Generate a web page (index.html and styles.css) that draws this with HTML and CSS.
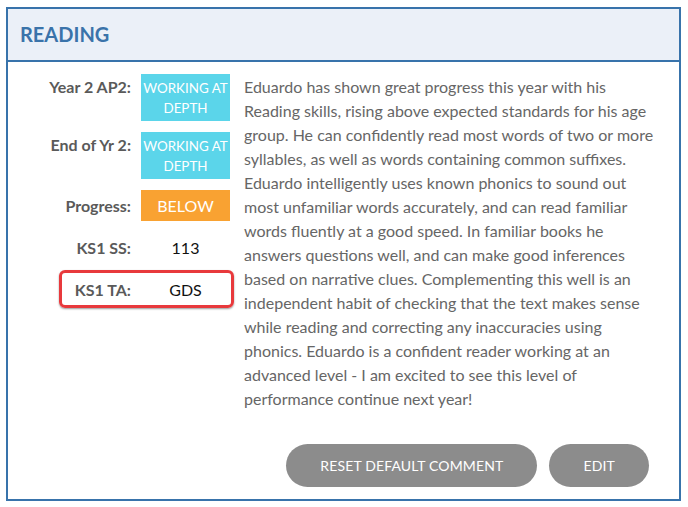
FILE: index.html
```html
<!DOCTYPE html>
<html lang="en">
<head>
  <meta charset="UTF-8" />
  <title>Reading report</title>
  <link rel="stylesheet" href="styles.css">
</head>
<body>

<div class="panel">
  <div class="panel-head">
    <h2 class="panel-title">READING</h2>
  </div>

  <div class="panel-body">
    <div class="summary">
      <div class="stats">
        <div class="stat">
          <div class="stat-label">Year 2 AP2:</div>
          <div class="stat-value"><span class="badge badge-depth">WORKING AT DEPTH</span></div>
        </div>
        <div class="stat">
          <div class="stat-label">End of Yr 2:</div>
          <div class="stat-value"><span class="badge badge-depth">WORKING AT DEPTH</span></div>
        </div>
        <div class="stat">
          <div class="stat-label">Progress:</div>
          <div class="stat-value"><span class="badge badge-below">BELOW</span></div>
        </div>
        <div class="stat">
          <div class="stat-label">KS1 SS:</div>
          <div class="stat-value">113</div>
        </div>
        <div class="stat flagged">
          <div class="stat-label">KS1 TA:</div>
          <div class="stat-value">GDS</div>
        </div>
      </div>

      <p class="comment">Eduardo has shown great progress this year with his Reading skills, rising above expected standards for his age group. He can confidently read most words of two or more syllables, as well as words containing common suffixes. Eduardo intelligently uses known phonics to sound out most unfamiliar words accurately, and can read familiar words fluently at a good speed. In familiar books he answers questions well, and can make good inferences based on narrative clues. Complementing this well is an independent habit of checking that the text makes sense while reading and correcting any inaccuracies using phonics. Eduardo is a confident reader working at an advanced level - I am excited to see this level of performance continue next year!</p>
    </div>

    <div class="actions">
      <button class="pill">RESET DEFAULT COMMENT</button>
      <button class="pill">EDIT</button>
    </div>
  </div>
</div>

</body>
</html>
```

FILE: styles.css
```css
* {
  box-sizing: border-box;
}

html, body {
  margin: 0;
  background: white;
  font-family: Lato, 'Open Sans', sans-serif;
}

body {
  padding: 7px 7px 0 6px;
}

.panel {
  width: 675px;
  border: 2px solid #3873ab;
}

.panel-head {
  height: 53px;
  background: #ebf0f8;
  border-bottom: 2px solid #3873ab;
  padding-left: 12px;
}

.panel-title {
  margin: 0;
  font-size: 20px;
  font-weight: 700;
  line-height: 51px;
  color: #3a73aa;
}

.panel-body {
  padding: 12px 0;
}

.summary {
  display: flex;
  align-items: flex-start;
}

.stats {
  display: flex;
  flex-direction: column;
  gap: 11px;
  margin-left: 23px;
}

/* label sits on the first line of its value */
.stat {
  position: relative;
  display: flex;
  align-items: baseline;
  gap: 10px;
}

.stat-label {
  width: 100px;
  text-align: right;
  font-size: 16px;
  font-weight: 700;
  color: #5a5a5a;
}

.stat-value {
  width: 89px;
  text-align: center;
  font-size: 16px;
  line-height: 31px;
  color: #111;
}

.badge {
  display: block;
  color: white;
  text-align: center;
}

.badge-depth {
  background: #5bd5ea;
  font-size: 13.4px;
  line-height: 20px;
  padding: 4px 0 3px;
}

.badge-below {
  background: #f9a232;
  font-size: 16px;
  line-height: 21px;
  padding: 5px 0;
}

/* highlight ring around a flagged row */
.stat.flagged::after {
  content: '';
  position: absolute;
  top: -4px;
  bottom: -3px;
  left: 28px;
  right: -4px;
  border: 3px solid #e8393c;
  border-radius: 6px;
  box-shadow: 0 1px 2px rgba(0, 0, 0, 0.4);
}

.comment {
  flex: none;
  width: 414px;
  margin: 1px 0 0 14px;
  font-size: 16px;
  line-height: 24px;
  color: #666;
}

.actions {
  display: flex;
  justify-content: flex-end;
  gap: 12px;
  margin-top: 33px;
  padding-right: 30px;
}

.pill {
  height: 43px;
  padding: 0 34px;
  border: none;
  border-radius: 22px;
  background: #8c8c8c;
  color: white;
  font-family: inherit;
  font-size: 14px;
  letter-spacing: 0.15px;
  cursor: pointer;
}
```
